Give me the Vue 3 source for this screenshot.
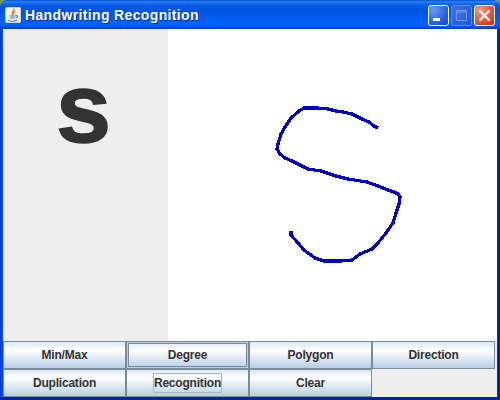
<template>
  <div class="window">
    <!-- Title bar -->
    <header class="title-bar">
      <svg class="app-icon" viewBox="0 0 16 16">
        <rect x="0.5" y="0.5" width="15" height="15" rx="1" fill="#f1f2f3" stroke="#c9d3e2" />
        <path d="M8.8 1.5C9.6 4 5.6 4.8 7.6 8M10.4 4C8.2 5.3 8.4 6 9 7.8" fill="none" stroke="#e0662f" stroke-width="1.2" />
        <path d="M4.5 9H10.5M5 11H10M10.8 8.6C13.4 8 13 10.6 10.6 10.8M3 13.2C5.5 14.3 10 14.2 12.4 13" fill="none" stroke="#5b7d9c" stroke-width="1.1" />
      </svg>
      <h1 class="title">Handwriting Recognition</h1>
      <div class="controls">
        <button class="control" aria-label="Minimize">
          <svg viewBox="0 0 21 21"><rect x="5" y="13" width="7" height="3" fill="#fff" /></svg>
        </button>
        <button class="control control-disabled" aria-label="Maximize" disabled>
          <svg viewBox="0 0 21 21">
            <path d="M5.5 5.5H15.5V15.5H5.5ZM5 7H16" fill="none" stroke="#6f98ee" />
          </svg>
        </button>
        <button class="control control-close" aria-label="Close">
          <svg viewBox="0 0 21 21">
            <path d="M5.5 5.5L15.5 15.5M15.5 5.5L5.5 15.5" fill="none" stroke="#fff" stroke-width="2.2" />
          </svg>
        </button>
      </div>
    </header>

    <!-- Result and drawing area -->
    <main class="workspace">
      <div class="result">{{ result }}</div>
      <svg class="canvas" viewBox="168 29 329 312">
        <polyline :points="stroke" />
      </svg>
    </main>

    <!-- Buttons -->
    <div class="actions">
      <button
        v-for="name in actions"
        :key="name"
        :class="['action', { 'action-default': name === 'Degree', 'action-focused': name === focused }]"
        @click="focused = name"
      >
        <span>{{ name }}</span>
      </button>
    </div>
  </div>
</template>

<script setup>
import { ref } from 'vue'

const result = ref('s')
const focused = ref('Recognition')

const actions = ['Min/Max', 'Degree', 'Polygon', 'Direction', 'Duplication', 'Recognition', 'Clear']

const stroke = [
  '378,128 374,126 369,122 362,119 352,114 343,112 336,111 328,109 318,108',
  '304,108 299,111 291,118 285,127 281,134 278,144 277,149 280,154 285,158',
  '292,161 300,165 308,169 321,171 336,176 348,179 367,182 378,186 388,190',
  '394,192 398,194 400,197 399,204 396,213 393,223 386,233 378,243 372,249',
  '360,254 352,260 341,261 324,261 315,258 304,250 298,243 291,235 291,231',
].join(' ')
</script>

<style>
body {
  margin: 0;
  overflow: hidden;
}
</style>

<style scoped>
.window {
  box-sizing: border-box;
  width: 500px;
  height: 400px;
  display: flex;
  flex-direction: column;
  padding: 0 3px 3px;
  background: linear-gradient(90deg, #0831d9 0, #0855dd 3px, #0855dd 497px, #001ea0 498px);
  border-radius: 7px 7px 0 0;
  box-shadow: inset 0 -3px #0624a8, 0 0 0 8px #6f9c50;
  font-family: "Liberation Sans", Arial, sans-serif;
}

button {
  padding: 0;
  margin: 0;
  font: inherit;
}

/* Title bar */
.title-bar {
  height: 29px;
  flex: none;
  display: flex;
  align-items: center;
  margin: 0 -3px;
  padding: 1px 5px 0;
  box-sizing: border-box;
  border-radius: 7px 7px 0 0;
  background: linear-gradient(#0753d5 0, #2c80f4 2px, #0d62e8 4px, #0054df 8px, #0056e6 14px, #0462f8 21px, #0463fb 25px, #0551dc 27px, #0140b5 29px);
}

.app-icon {
  width: 16px;
  height: 16px;
}

.title {
  flex: 1;
  margin: 0 0 0 4px;
  color: #fff;
  font-size: 14px;
  font-weight: 700;
  line-height: 18px;
  letter-spacing: 0.36px;
  white-space: nowrap;
  text-shadow: 1px 1px #0a2f87;
}

.controls {
  display: flex;
  gap: 2px;
  margin-top: 1px;
}

.control {
  box-sizing: border-box;
  width: 21px;
  height: 21px;
  border: 1px solid #fff;
  border-radius: 3px;
  background: radial-gradient(circle at 25% 20%, #6b9bf5, #2d62df 60%, #1546be);
}

.control svg {
  display: block;
  width: 21px;
  height: 21px;
  margin: -1px;
}

.control-disabled {
  border-color: #5f8be8;
  background: radial-gradient(circle at 30% 30%, #3e74e6, #1b55d6);
}

.control-close {
  background: radial-gradient(circle at 25% 20%, #f09b80, #de5432 60%, #bd3312);
}

/* Workspace */
.workspace {
  height: 312px;
  flex: none;
  display: flex;
  background: #fff;
}

.result {
  box-sizing: border-box;
  width: 165px;
  padding: 21px 4px 0 0;
  background: #eee;
  color: #333;
  font-size: 99px;
  font-weight: 700;
  line-height: 115px;
  text-align: center;
  -webkit-text-stroke: 1.5px #333;
}

.canvas {
  width: 329px;
  height: 312px;
}

.canvas polyline {
  fill: none;
  stroke: #0000c0;
  stroke-width: 3.2;
  shape-rendering: crispEdges;
}

/* Buttons */
.actions {
  display: grid;
  grid-template-columns: repeat(4, 123px);
  grid-auto-rows: 28px;
  background: #eee;
}

.action {
  box-sizing: border-box;
  display: flex;
  align-items: center;
  justify-content: center;
  border: 1px solid #7a8a99;
  border-radius: 0;
  background: linear-gradient(#dde8f3 0, #fff 30%, #f4f8fb 42%, #b8cfe5 100%);
  color: #333;
  font-size: 12px;
  font-weight: 700;
  letter-spacing: -0.2px;
}

.action-default {
  box-shadow: inset 0 0 0 1px #b8cfe5, inset 0 0 0 2px #7a8a99;
}

.action span {
  border: 1px solid transparent;
  line-height: 18px;
}

.action-focused span {
  border-color: #a3b8cc;
}
</style>
